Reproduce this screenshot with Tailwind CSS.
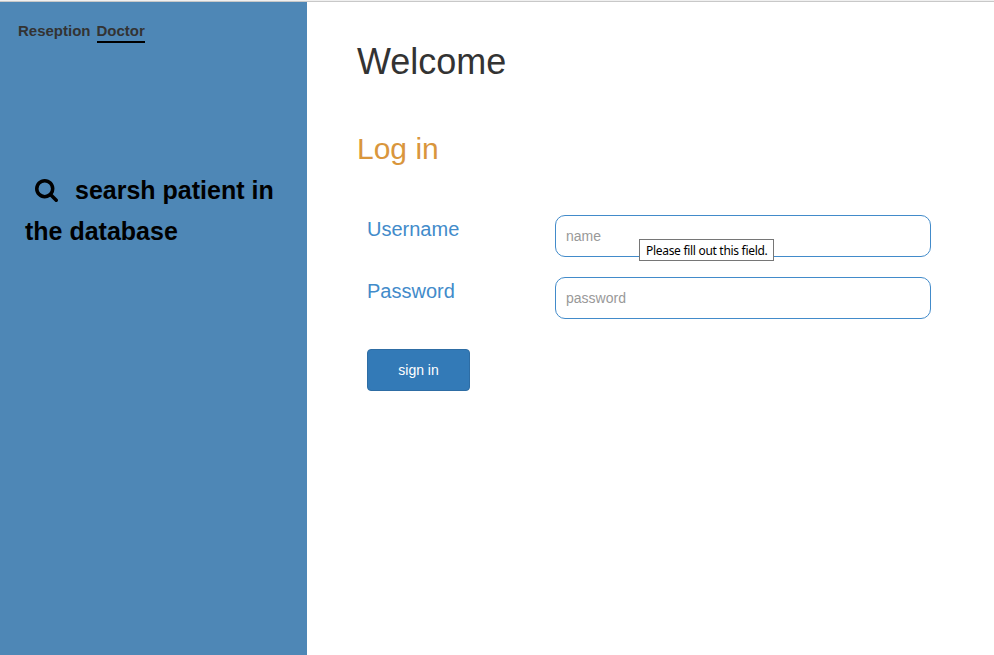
<!DOCTYPE html>
<html lang="en">
<head>
<meta charset="utf-8">
<title>Log in</title>
<script src="https://cdn.jsdelivr.net/npm/@tailwindcss/browser@4"></script>
</head>
<body class="h-[655px] overflow-hidden bg-white font-['Liberation_Sans',Arial,sans-serif] text-[14px] text-[#333]">
<div class="flex h-full flex-col">
  <div class="h-[2px] shrink-0 border-t border-[#f0f0f0] bg-[#c8c8c8]"></div>
  <div class="flex flex-1">
    <aside class="w-[307px] shrink-0 bg-[#4e87b6]">
      <nav class="flex gap-[6px] pl-[18px] pt-[19px] text-[15px] leading-[20px] font-bold">
        <a>Reseption</a>
        <a class="border-b-2 border-black">Doctor</a>
      </nav>
      <h2 class="mt-[127px] flex flex-col pl-[25px] text-[25px] leading-[41px] font-bold text-black">
        <span class="flex items-center pl-[10px]">
          <svg class="mr-[17px] h-[23px] w-[23px]" viewBox="0 0 1664 1664" fill="currentColor"><path d="M1152 704q0-185-131.500-316.500T704 256 387.500 387.500 256 704t131.500 316.500T704 1152t316.500-131.500T1152 704zm512 832q0 52-38 90t-90 38q-54 0-90-38l-343-342q-179 124-399 124-143 0-273.500-55.500t-225-150-150-225T0 704t55.500-273.500 150-225 225-150T704 0t273.500 55.500 225 150 150 225T1408 704q0 220-124 399l343 343q37 37 37 90z"/></svg>
          <span>searsh patient in</span>
        </span>
        <span>the database</span>
      </h2>
    </aside>
    <main class="flex-1 pl-[50px] pt-[40px]">
      <h1 class="text-[36px] leading-[40px]">Welcome</h1>
      <h2 class="mt-[49px] text-[30px] leading-[36px] text-[#d9963c]">Log in</h2>
      <form class="pl-[10px]">
        <div class="mt-[48px] flex">
          <label class="w-[188px] pt-[2px] text-[20px] leading-[24px] text-[#428bca]">Username</label>
          <div class="relative">
            <input class="block h-[42px] w-[376px] rounded-[10px] border border-[#428bca] px-[10px] placeholder:text-[#999]" placeholder="name">
            <div class="absolute top-[24px] left-[84px] flex h-[22px] w-[135px] items-center border border-[#767676] bg-white pt-[2px] pl-[6px] font-['Noto_Sans',sans-serif] text-[12px] tracking-[-0.3px] whitespace-nowrap text-black">Please fill out this field.</div>
          </div>
        </div>
        <div class="mt-[20px] flex">
          <label class="w-[188px] pt-[2px] text-[20px] leading-[24px] text-[#428bca]">Password</label>
          <input class="block h-[42px] w-[376px] rounded-[10px] border border-[#428bca] px-[10px] placeholder:text-[#999]" placeholder="password">
        </div>
        <button class="mt-[30px] block h-[42px] w-[103px] rounded-[4px] border border-[#2e6da4] bg-[#337ab7] text-white">sign in</button>
      </form>
    </main>
  </div>
</div>
</body>
</html>
